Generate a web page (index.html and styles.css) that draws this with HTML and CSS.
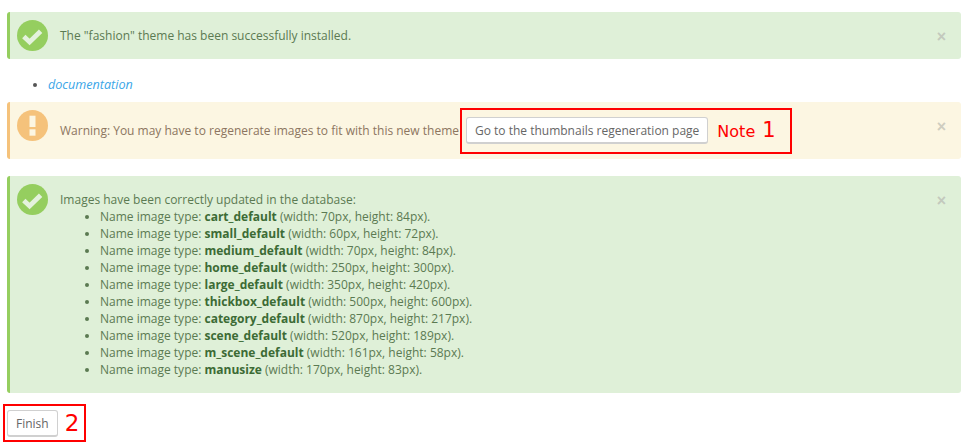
FILE: index.html
```html
<!DOCTYPE html>
<html lang="en">
<head>
<meta charset="utf-8">
<title>Theme installed</title>
<link rel="stylesheet" href="styles.css">
</head>
<body>
<svg class="defs" width="0" height="0" aria-hidden="true">
  <symbol id="check" viewBox="0 0 31 31">
    <circle cx="15.5" cy="15.5" r="15.5" fill="#95ce5f"/>
    <path d="M6.8 16.4 L12.6 22 L23.6 11.2" fill="none" stroke="#e4f2dd" stroke-width="4.8"/>
  </symbol>
  <symbol id="warn" viewBox="0 0 31 31">
    <circle cx="15.5" cy="15.5" r="15.5" fill="#f5c27b"/>
    <rect x="12.5" y="5.7" width="6" height="11.3" fill="#fcf6e2"/>
    <rect x="12.5" y="19.3" width="6" height="6.4" fill="#fcf6e2"/>
  </symbol>
</svg>

<div class="alert alert-success alert-short">
  <svg class="alert-icon"><use href="#check"/></svg>
  <button class="close" type="button">×</button>
  <p class="alert-text">The "fashion" theme has been successfully installed.</p>
</div>

<ul class="links">
  <li><a href="#">documentation</a></li>
</ul>

<div class="alert alert-warning">
  <svg class="alert-icon"><use href="#warn"/></svg>
  <button class="close" type="button">×</button>
  <p class="alert-text">Warning: You may have to regenerate images to fit with this new theme</p>
  <div class="note-box note-box-wide">
    <a class="btn" href="#">Go to the thumbnails regeneration page</a>
    <span class="note">Note <span class="note-num">1</span></span>
  </div>
</div>

<div class="alert alert-success alert-tall">
  <svg class="alert-icon"><use href="#check"/></svg>
  <button class="close" type="button">×</button>
  <div class="alert-body">
    Images have been correctly updated in the database:
    <ul class="types">
      <li>Name image type: <strong>cart_default</strong> (width: 70px, height: 84px).</li>
      <li>Name image type: <strong>small_default</strong> (width: 60px, height: 72px).</li>
      <li>Name image type: <strong>medium_default</strong> (width: 70px, height: 84px).</li>
      <li>Name image type: <strong>home_default</strong> (width: 250px, height: 300px).</li>
      <li>Name image type: <strong>large_default</strong> (width: 350px, height: 420px).</li>
      <li>Name image type: <strong>thickbox_default</strong> (width: 500px, height: 600px).</li>
      <li>Name image type: <strong>category_default</strong> (width: 870px, height: 217px).</li>
      <li>Name image type: <strong>scene_default</strong> (width: 520px, height: 189px).</li>
      <li>Name image type: <strong>m_scene_default</strong> (width: 161px, height: 58px).</li>
      <li>Name image type: <strong>manusize</strong> (width: 170px, height: 83px).</li>
    </ul>
  </div>
</div>

<div class="note-box note-box-finish">
  <a class="btn" href="#">Finish</a>
  <span class="note note-finish">2</span>
</div>
</body>
</html>
```

FILE: styles.css
```css
* { box-sizing: border-box; }

html, body { height: 100%; }

body {
  margin: 0;
  padding: 12px 7px 0;
  overflow: hidden;
  background: #fff;
  font-family: "Open Sans", "Liberation Sans", sans-serif;
  font-size: 12px;
  line-height: 17px;
  color: #666;
}

.defs { position: absolute; }

.alert {
  position: relative;
  display: flex;
  align-items: center;
  border-left: 3px solid;
  border-radius: 3px;
  padding-left: 50px;
}

.alert-success {
  background: #dff0d8;
  border-color: #95ce5f;
  color: #5b7a52;
}

.alert-warning {
  height: 57px;
  background: #fcf6e2;
  border-color: #f5c27b;
  color: #8c7560;
}

.alert-short { height: 47px; }

.alert-tall {
  display: block;
  height: 217px;
  margin-top: 17px;
  padding-top: 15px;
}

.alert-icon {
  position: absolute;
  left: 7px;
  top: 8px;
  width: 31px;
  height: 31px;
}

.alert-text { margin: 0; white-space: nowrap; }

.close {
  position: absolute;
  right: 15px;
  top: 15px;
  padding: 0;
  border: 0;
  background: none;
  font: 700 16px/20px "Liberation Sans", sans-serif;
  color: #c3c9bd;
}

.alert-warning .close { color: #cfcdc0; }

.links {
  margin: 17px 0 9px;
  padding-left: 41px;
  color: #555;
}

.links a {
  color: #3aa6e8;
  font-size: 12.6px;
  font-style: italic;
  text-decoration: none;
}

.types {
  margin: 0;
  padding-left: 40px;
}

.types strong { color: #3c6b35; }

.note-box {
  display: flex;
  align-items: center;
  border: 2px solid #f00;
  background: #fff0;
}

.note-box-wide {
  width: 332px;
  height: 46px;
  margin-left: 1px;
  padding-left: 4px;
}

.note-box-finish {
  width: 83px;
  height: 38px;
  margin: 11px 0 0 -4px;
  padding-left: 2px;
}

.btn {
  display: block;
  padding: 4px 8px 4px;
  height: 27px;
  border: 1px solid #d0d0d0;
  border-bottom-width: 2px;
  border-radius: 3px;
  background: #fff;
  color: #666;
  text-decoration: none;
  white-space: nowrap;
}

.note {
  margin-left: 9px;
  font-family: "DejaVu Sans", sans-serif;
  font-size: 16px;
  line-height: 24px;
  color: #f00;
}

.note-num {
  margin-left: 2px;
  font-size: 21px;
}

.note-finish {
  margin-left: 7px;
  font-size: 23px;
}
```
